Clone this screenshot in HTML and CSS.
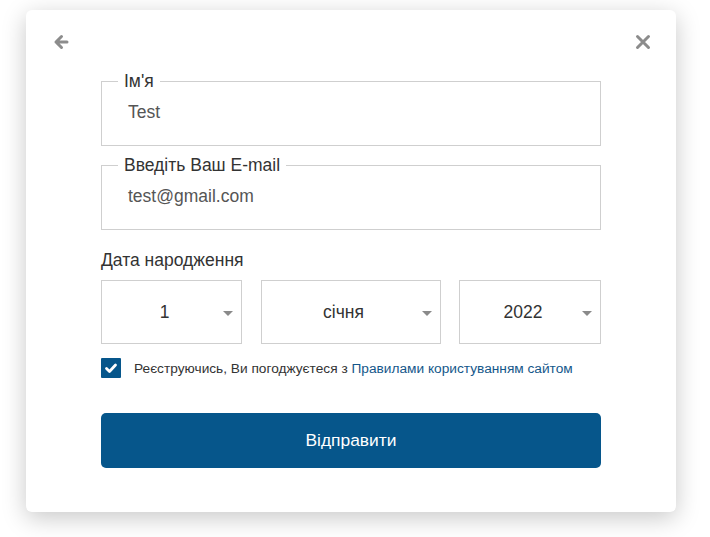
FILE: index.html
```html
<!DOCTYPE html>
<html lang="uk">
<head>
<meta charset="utf-8">
<link rel="stylesheet" href="styles.css">
</head>
<body>
<div class="card">
  <div class="header">
    <svg class="icon" width="16" height="16" viewBox="0 0 16 16"><path d="M14 8H3M8.5 2.5L3 8l5.5 5.5" fill="none" stroke="#8c8c8c" stroke-width="3" stroke-linecap="round" stroke-linejoin="round"/></svg>
    <svg class="icon" width="16" height="16" viewBox="0 0 16 16"><path d="M2.5 2.5l11 11M13.5 2.5l-11 11" fill="none" stroke="#8c8c8c" stroke-width="3" stroke-linecap="round"/></svg>
  </div>
  <form class="form">
    <fieldset class="field">
      <legend>Ім'я</legend>
      <div class="value">Test</div>
    </fieldset>
    <fieldset class="field field2">
      <legend>Введіть Ваш E-mail</legend>
      <div class="value">test@gmail.com</div>
    </fieldset>
    <div class="label">Дата народження</div>
    <div class="selects">
      <div class="select"><span>1</span><i class="caret"></i></div>
      <div class="select"><span>січня</span><i class="caret"></i></div>
      <div class="select"><span>2022</span><i class="caret"></i></div>
    </div>
    <div class="agree">
      <span class="check"><svg width="20" height="20" viewBox="0 0 20 20"><path d="M5.5 10.5l3 3 6-6.5" fill="none" stroke="#fff" stroke-width="2.8" stroke-linecap="round" stroke-linejoin="round"/></svg></span>
      <span class="agree-text">Реєструючись, Ви погоджуєтеся з <a class="link">Правилами користуванням сайтом</a></span>
    </div>
    <div class="button">Відправити</div>
  </form>
</div>
</body>
</html>
```
FILE: styles.css
```css
html, body {
  margin: 0;
  padding: 0;
  background: #ffffff;
}
body {
  font-family: "Liberation Sans", Arial, sans-serif;
  color: #333;
  padding: 10px 0 0 26px;
  height: 537px;
  box-sizing: border-box;
}
.card {
  width: 650px;
  height: 502px;
  box-sizing: border-box;
  background: #fff;
  border-radius: 6px;
  box-shadow: 0 6px 24px rgba(0, 0, 0, 0.22);
  padding: 24px 25px 0 27px;
}
.header {
  display: flex;
  justify-content: space-between;
  height: 16px;
}
.icon {
  display: block;
}
.form {
  margin: 22px 0 0 48px;
  width: 500px;
}
.field {
  margin: 0;
  border: 1px solid #cfcfcf;
  padding: 0 0 8px 16px;
  min-width: 0;
}
.field legend {
  padding: 0 6px;
  font-size: 17.5px;
  line-height: 18px;
  color: #333;
}
.field2 {
  margin-top: 10px;
}
.value {
  height: 48px;
  line-height: 46px;
  padding-left: 10px;
  font-size: 17.5px;
  color: #555;
  margin-top: -1px;
}
.label {
  margin-top: 20px;
  font-size: 17.5px;
  line-height: 20px;
  color: #333;
}
.selects {
  margin-top: 10px;
  display: grid;
  grid-template-columns: 141px 180px 142px;
  justify-content: space-between;
}
.select {
  position: relative;
  height: 64px;
  box-sizing: border-box;
  border: 1px solid #cfcfcf;
  display: flex;
  align-items: center;
  justify-content: center;
  padding-right: 14px;
  font-size: 17.5px;
  color: #333;
}
.caret {
  position: absolute;
  right: 8px;
  top: 30px;
  width: 0;
  height: 0;
  border-left: 5px solid transparent;
  border-right: 5px solid transparent;
  border-top: 5px solid #8a8a8a;
}
.agree {
  margin-top: 14px;
  display: flex;
  align-items: center;
  gap: 13px;
}
.check {
  width: 20px;
  height: 20px;
  background: #06568b;
  border-radius: 1px;
  display: block;
}
.check svg {
  display: block;
}
.agree-text {
  font-size: 13.7px;
  color: #333;
}
.link {
  color: #14578a;
}
.button {
  margin-top: 35px;
  height: 55px;
  border-radius: 5px;
  background: #06568b;
  color: #fff;
  font-size: 17.4px;
  display: flex;
  align-items: center;
  justify-content: center;
}
```
